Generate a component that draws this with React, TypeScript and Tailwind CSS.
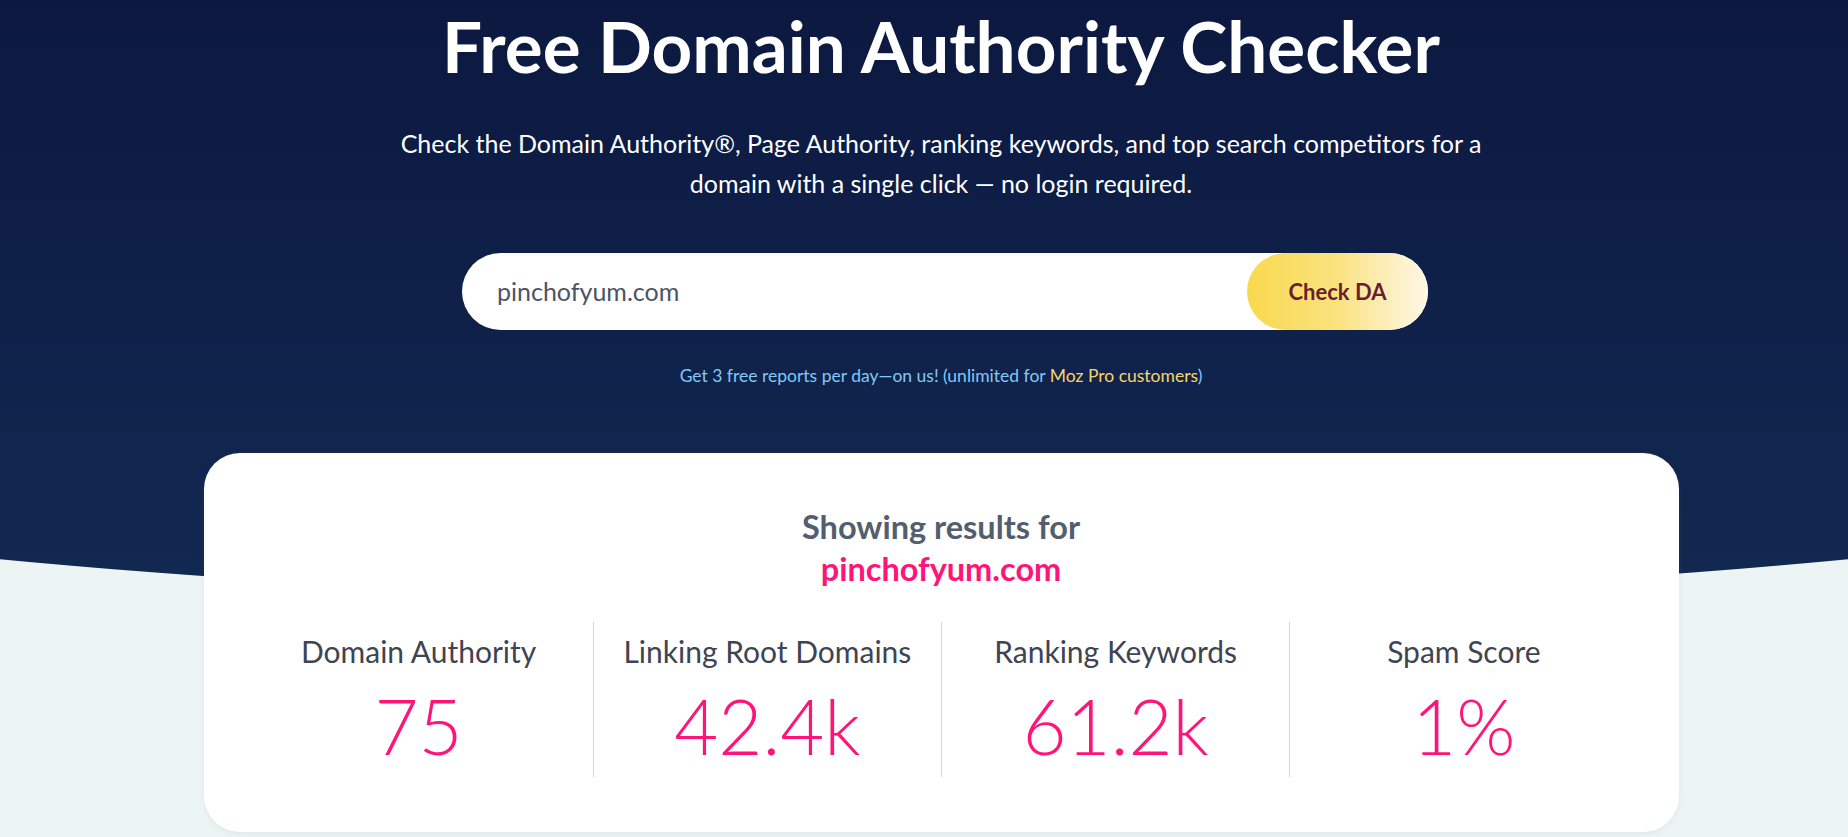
import React from "react";

const stats = [
  { label: "Domain Authority", value: "75" },
  { label: "Linking Root Domains", value: "42.4k" },
  { label: "Ranking Keywords", value: "61.2k" },
  { label: "Spam Score", value: "1%" },
];

export default function App() {
  return (
    <div className="relative min-h-screen overflow-hidden bg-[#edf5f4] font-['Lato',sans-serif]">
      <div className="absolute left-1/2 top-0 h-[601px] w-[4000px] -translate-x-1/2 rounded-bl-[2000px_370px] rounded-br-[2000px_370px] bg-linear-to-b from-[#0c1840] to-[#122952]" />
      <div className="relative flex flex-col items-center pl-[34px] pt-[3px]">
        <h1 className="text-[71px] font-bold leading-[86px] text-white">Free Domain Authority Checker</h1>
        <p className="mt-[34px] text-center text-[25px] leading-[40px] text-white">
          Check the Domain Authority®, Page Authority, ranking keywords, and top search competitors for a
          <br />
          domain with a single click — no login required.
        </p>
        <div className="ml-[8px] mt-[50px] flex h-[77px] w-[966px] items-center rounded-full bg-white">
          <div className="flex-1 pl-[35px] text-[25px] text-[#4b5466]">pinchofyum.com</div>
          <button className="flex h-full w-[181px] items-center justify-center rounded-full bg-linear-to-r from-[#f8d94c] via-[#fae27e] to-[#fef7e6] text-[22px] font-bold text-[#6b1d2f]">
            Check DA
          </button>
        </div>
        <p className="mt-[34px] text-center text-[17.5px] leading-[24px] text-[#84c8f5]">
          Get 3 free reports per day—on us! (unlimited for <span className="text-[#fcd36a]">Moz Pro customers</span>)
        </p>
        <div className="mt-[65px] w-[1475px] rounded-[36px] bg-white px-[41px] pb-[55px] pt-[53px] shadow-[0_2px_6px_rgba(120,150,160,0.12)]">
          <div className="text-center text-[32.5px] font-bold leading-[42px]">
            <div className="text-[#535e6e]">Showing results for</div>
            <div className="text-[#ff1478]">pinchofyum.com</div>
          </div>
          <div className="mt-[32px] grid grid-cols-4">
            {stats.map((s, i) => (
              <div
                key={s.label}
                className={
                  i === 0
                    ? "flex flex-col items-center pb-[13px] pt-[11px]"
                    : "flex flex-col items-center border-l border-[#d4d6da] pb-[13px] pt-[11px]"
                }
              >
                <div className="text-[30px] leading-[36px] text-[#3e4452]">{s.label}</div>
                <div className="mt-[19px] text-[76px] font-light leading-[76px] text-[#ff1478]">{s.value}</div>
              </div>
            ))}
          </div>
        </div>
      </div>
    </div>
  );
}
